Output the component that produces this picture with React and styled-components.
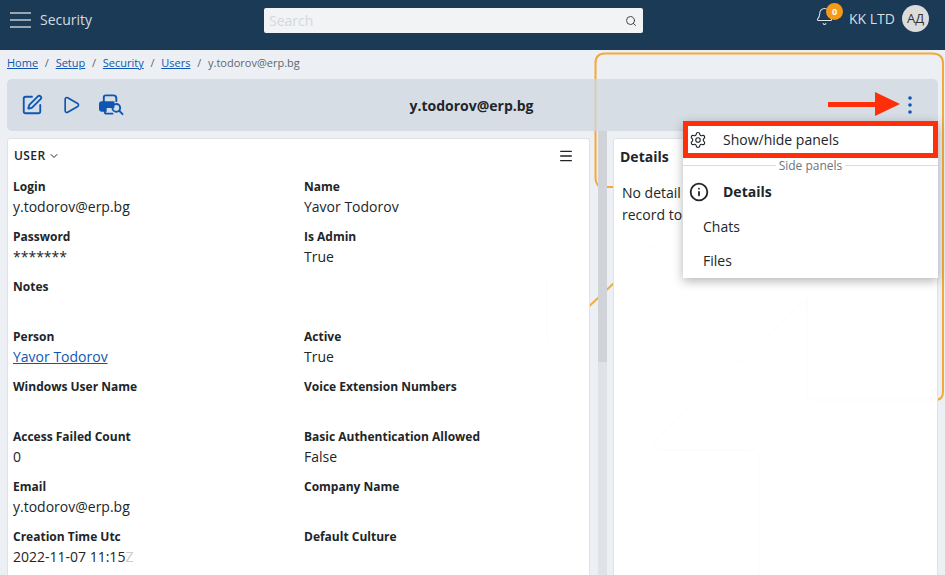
import React from 'react';
import styled, { createGlobalStyle } from 'styled-components';
import { SquarePen, Play, Search, Settings, Info, Bell, ChevronDown, Menu } from 'lucide-react';

const GlobalStyle = createGlobalStyle`
  html, body {
    margin: 0;
    height: 100%;
    overflow: hidden;
    background: #ecf0f5;
    font-family: "Open Sans", "Noto Sans", sans-serif;
    color: #212529;
  }
`;

const Page = styled.div`
  position: relative;
  width: 945px;
  height: 575px;
  overflow: hidden;
  display: flex;
  flex-direction: column;
`;

const Header = styled.header`
  height: 50px;
  flex: none;
  display: grid;
  grid-template-columns: 264px 379px 1fr;
  background: #1a3a56;
  color: #dfe3e8;
`;

const HeaderLeft = styled.div`
  display: flex;
  align-items: flex-start;
  padding: 12px 0 0 10px;
  gap: 9px;
`;

const Burger = styled.span`
  width: 21px;
  height: 16px;
  display: flex;
  flex-direction: column;
  justify-content: space-between;

  i {
    display: block;
    height: 2px;
    background: #98a6b4;
  }
`;

const ModuleTitle = styled.span`
  font-size: 14px;
  line-height: 15px;
  color: #d5dae0;
`;

const SearchBox = styled.div`
  height: 25px;
  margin-top: 8px;
  display: flex;
  align-items: center;
  justify-content: space-between;
  padding: 0 6px 0 5px;
  background: #f1f3f5;
  border-radius: 2px;
  color: #333;

  span {
    font-size: 14px;
    color: #d4d8dc;
  }
`;

const HeaderRight = styled.div`
  display: flex;
  justify-content: flex-end;
  align-items: flex-start;
  padding: 5px 16px 0 0;
`;

const BellWrap = styled.div`
  position: relative;
  width: 19px;
  height: 22px;
  margin: 2px 15px 0 0;
`;

const Badge = styled.span`
  position: absolute;
  top: -4px;
  left: 11px;
  width: 17px;
  height: 17px;
  border-radius: 50%;
  background: #f59a1b;
  color: #fff;
  font-size: 9px;
  font-weight: 700;
  line-height: 17px;
  text-align: center;
`;

const Company = styled.span`
  font-size: 14px;
  line-height: 28px;
  color: #d9dde2;
`;

const Avatar = styled.span`
  width: 27px;
  height: 27px;
  margin-left: 7px;
  border-radius: 50%;
  background: #dcdcdc;
  color: #333;
  font-size: 13px;
  line-height: 27px;
  text-align: center;
`;

const Outline = styled.svg`
  position: absolute;
  inset: 0;
  pointer-events: none;
`;

const Content = styled.main`
  position: relative;
  flex: 1;
  min-height: 0;
  display: flex;
  flex-direction: column;
`;

const Crumbs = styled.nav`
  height: 25px;
  flex: none;
  padding: 0 0 4px 7px;
  display: flex;
  align-items: center;
  font-size: 11px;
  color: #5f666d;

  a {
    color: #0f56b3;
    text-decoration: underline;
  }

  b {
    font-weight: 400;
    margin: 0 6.75px;
  }
`;

const Toolbar = styled.div`
  height: 52px;
  flex: none;
  margin: 0 7px;
  padding: 0 25px 0 14px;
  display: flex;
  align-items: center;
  position: relative;
  border-radius: 5px;
  background: rgba(207, 215, 223, 0.78);
`;

const ToolIcons = styled.div`
  display: flex;
  align-items: center;
  gap: 18px;
  color: #0f56b3;
`;

const ToolTitle = styled.div`
  position: absolute;
  left: 0;
  right: 0;
  padding-right: 2px;
  text-align: center;
  font-size: 14px;
  font-weight: 700;
`;

const Kebab = styled.svg`
  margin-left: auto;
  color: #0f56b3;
`;

const Arrow = styled.svg`
  position: absolute;
  left: 821px;
  top: 13px;
`;

const Panels = styled.div`
  flex: 1;
  min-height: 0;
  display: grid;
  grid-template-columns: 583px 23px 325px;
  padding: 7px 0 0 7px;
  position: relative;
`;

const Card = styled.section`
  background: rgba(255, 255, 255, 0.98);
  border: 1px solid #dfe3e8;
  border-bottom: 0;
  border-radius: 3px 3px 0 0;
  overflow: hidden;
`;

const CardHead = styled.div`
  height: 33px;
  display: flex;
  align-items: center;
  padding: 0 15px 0 6px;
  font-size: 12px;
  font-weight: 600;
  letter-spacing: 0.4px;

  svg:first-of-type {
    margin-left: 3px;
  }

  svg:last-child {
    margin-left: auto;
  }
`;

const Fields = styled.div`
  display: grid;
  grid-template-columns: 291px 1fr;
  grid-auto-rows: 50px;
  padding: 5px 0 0 5px;
`;

const Field = styled.div`
  font-size: 14px;
  line-height: 20px;
  white-space: nowrap;

  label {
    display: block;
    font-size: 12px;
    font-weight: 700;
    line-height: 19px;
    margin-bottom: 1px;
  }

  a {
    color: #0f56b3;
    text-decoration: underline;
  }

  em {
    font-style: normal;
    color: #c9cdd1;
  }
`;

const Gutter = styled.div`
  margin: -7px 6px 0 8px;
  background: linear-gradient(#d0d4d9 0 231px, #dfe2e7 231px);
`;

const DetailsTitle = styled.div`
  padding: 8px 0 0 6px;
  font-size: 14px;
  font-weight: 700;
`;

const DetailsText = styled.div`
  padding: 16px 0 0 8px;
  font-size: 14px;
  line-height: 22px;
  white-space: nowrap;
`;

const Dropdown = styled.div`
  position: absolute;
  left: 683px;
  top: -10px;
  width: 255px;
  height: 157px;
  background: #fff;
  box-shadow: 0 3px 10px rgba(0, 0, 0, 0.3);
`;

const MenuBoxed = styled.div`
  box-sizing: border-box;
  height: 37px;
  padding-left: 1px;
  display: flex;
  align-items: center;
  gap: 16px;
  border: 5px solid #ff2f0a;
  font-size: 14px;
`;

const Divider = styled.div`
  height: 14px;
  margin-bottom: 2px;
  display: flex;
  align-items: center;
  gap: 3px;
  font-size: 12px;
  color: #6c757d;

  &::before,
  &::after {
    content: '';
    flex: 1;
    height: 1px;
    background: #d8dce0;
  }
`;

const MenuItem = styled.div`
  height: ${({ $active }) => ($active ? '35px' : '34px')};
  display: flex;
  align-items: center;
  gap: 14px;
  padding-left: ${({ $icon }) => ($icon ? '6px' : '20px')};
  font-size: 14px;
  font-weight: ${({ $active }) => ($active ? 700 : 400)};
`;

const fields = [
  ['Login', 'y.todorov@erp.bg'],
  ['Name', 'Yavor Todorov'],
  ['Password', '*******'],
  ['Is Admin', 'True'],
  ['Notes', ''],
  ['', ''],
  ['Person', <a href="#person">Yavor Todorov</a>],
  ['Active', 'True'],
  ['Windows User Name', ''],
  ['Voice Extension Numbers', ''],
  ['Access Failed Count', '0'],
  ['Basic Authentication Allowed', 'False'],
  ['Email', 'y.todorov@erp.bg'],
  ['Company Name', ''],
  ['Creation Time Utc', <>2022-11-07 11:15<em>Z</em></>],
  ['Default Culture', ''],
];

function PrintSearch() {
  return (
    <svg width="25" height="22" viewBox="0 0 26 22" fill="none" stroke="currentColor" strokeWidth="2" strokeLinecap="round">
      <path d="M5 8V3a2 2 0 0 1 2-2h8a3 3 0 0 1 3 3v3" />
      <path d="M1 10a2 2 0 0 1 2-2h12v5H7v4H3a2 2 0 0 1-2-2z" fill="currentColor" />
      <path d="M6 14v4a2 2 0 0 0 2 2h6" />
      <circle cx="18" cy="14" r="4" />
      <path d="M21 17l3.5 3.5" />
    </svg>
  );
}

export default function App() {
  return (
    <>
      <GlobalStyle />
      <Page>
        <Header>
          <HeaderLeft>
            <Burger><i /><i /><i /></Burger>
            <ModuleTitle>Security</ModuleTitle>
          </HeaderLeft>
          <SearchBox>
            <span>Search</span>
            <Search size={12} strokeWidth={1.8} />
          </SearchBox>
          <HeaderRight>
            <BellWrap>
              <Bell size={19} strokeWidth={1.3} />
              <Badge>0</Badge>
            </BellWrap>
            <Company>KK LTD</Company>
            <Avatar>АД</Avatar>
          </HeaderRight>
        </Header>
        <Content>
          <Outline width="945" height="525" viewBox="0 0 945 525">
            <path
              d="M595.5 13Q595.5 3.5 605 3.5H932Q943 3.5 943 13V342Q943 350 935 350H815Q807 350 807 342V248L655 390Q651 400 660 400H750Q759 400 759 408V525M595.5 13V128Q595.5 137 604 137H613M660 190L552 291Q547 293 547 285V230"
              fill="none"
              stroke="#f5a83a"
              strokeWidth="2"
            />
          </Outline>
          <Crumbs>
            <a href="#home">Home</a><b>/</b>
            <a href="#setup">Setup</a><b>/</b>
            <a href="#security">Security</a><b>/</b>
            <a href="#users">Users</a><b>/</b>
            <span>y.todorov@erp.bg</span>
          </Crumbs>
          <Toolbar>
            <ToolIcons>
              <SquarePen size={22} strokeWidth={2} />
              <Play size={20} strokeWidth={2} />
              <PrintSearch />
            </ToolIcons>
            <ToolTitle>y.todorov@erp.bg</ToolTitle>
            <Kebab width="6" height="20" viewBox="0 0 6 20">
              <circle cx="3" cy="3" r="1.8" fill="currentColor" />
              <circle cx="3" cy="10" r="1.8" fill="currentColor" />
              <circle cx="3" cy="17" r="1.8" fill="currentColor" />
            </Kebab>
            <Arrow width="72" height="24" viewBox="0 0 72 24">
              <path d="M0 10h47V0l25 12-25 12V15H0z" fill="#ff2f0a" />
            </Arrow>
          </Toolbar>
          <Panels>
            <Card>
              <CardHead>
                USER <ChevronDown size={12} />
                <Menu size={16} strokeWidth={2} />
              </CardHead>
              <Fields>
                {fields.map(([label, value], i) => (
                  <Field key={i}>
                    <label>{label}</label>
                    {value}
                  </Field>
                ))}
              </Fields>
            </Card>
            <Gutter />
            <Card>
              <DetailsTitle>Details</DetailsTitle>
              <DetailsText>No detail<br />record to</DetailsText>
            </Card>
            <Dropdown>
              <MenuBoxed>
                <Settings size={18} strokeWidth={1.5} />
                Show/hide panels
              </MenuBoxed>
              <Divider>Side panels</Divider>
              <MenuItem $icon $active>
                <Info size={20} strokeWidth={2.2} />
                Details
              </MenuItem>
              <MenuItem>Chats</MenuItem>
              <MenuItem>Files</MenuItem>
            </Dropdown>
          </Panels>
        </Content>
      </Page>
    </>
  );
}
